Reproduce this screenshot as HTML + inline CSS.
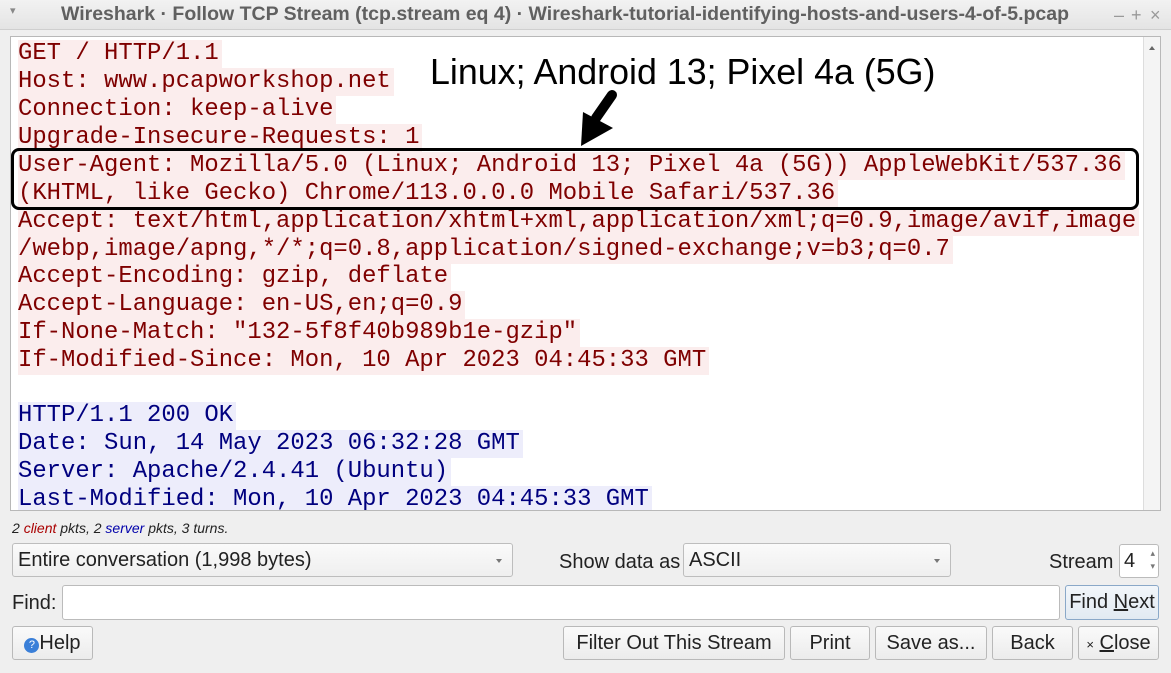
<!DOCTYPE html>
<html><head><meta charset="utf-8"><style>
*{box-sizing:border-box;margin:0;padding:0}
body{width:1171px;height:673px;background:#efefef;position:relative;overflow:hidden;font-family:"Liberation Sans",sans-serif;color:#222}
.abs{position:absolute}
.title{left:0;top:0;width:1130px;height:30px;text-align:center;font-size:19.5px;line-height:29px;color:#606060;font-weight:bold;white-space:nowrap}
.tbar{left:0;top:0;width:1171px;height:30px;background:linear-gradient(#f2f2f2,#e4e4e4);border-bottom:1px solid #cfcfcf}
.ta{left:10px;top:36px;width:1151px;height:475px;background:#fff;border:1px solid #b8b8b8}
.code{left:11px;top:40px;width:1132px;height:470px;overflow:hidden;font-family:"Liberation Mono",monospace;font-size:23.9px}
.ln{position:absolute;left:7px;height:28px;line-height:28px;white-space:pre;padding-right:3px}
.c{color:#7f0000;background:#fbeded}
.s{color:#00007f;background:#ededfb}
.sb{left:1143px;top:37px;width:17px;height:473px;background:#f4f4f4;border-left:1px solid #ddd}
.btn{position:absolute;height:34px;border:1px solid #b9b9b9;border-radius:3px;background:linear-gradient(#fafafa,#ececec);font-size:20px;line-height:32px;text-align:center;color:#222}
.combo{position:absolute;height:34px;border:1px solid #bdbdbd;border-radius:3px;background:linear-gradient(#fafafa,#efefef);font-size:20px;line-height:32px;padding-left:5px}
.combo:after{content:"";position:absolute;right:10px;top:15px;border:3px solid transparent;border-top:4px solid #777}
.lbl{position:absolute;font-size:20px;line-height:24px}
.wc{position:absolute;top:2px;font-size:18px;color:#999;line-height:26px}
</style></head><body>
<div class="abs tbar"></div>
<div class="abs title">Wireshark · Follow TCP Stream (tcp.stream eq 4) · Wireshark-tutorial-identifying-hosts-and-users-4-of-5.pcap</div>
<div class="abs" style="left:10px;top:4px;font-size:11px;color:#888">▾</div>
<span class="wc" style="left:1114px">–</span><span class="wc" style="left:1131px">+</span><span class="wc" style="left:1150px">×</span>
<div class="abs ta"></div>
<div class="abs code">
<div class="ln c" style="top:0">GET / HTTP/1.1</div>
<div class="ln c" style="top:28px">Host: www.pcapworkshop.net</div>
<div class="ln c" style="top:56px">Connection: keep-alive</div>
<div class="ln c" style="top:84px">Upgrade-Insecure-Requests: 1</div>
<div class="ln c" style="top:112px">User-Agent: Mozilla/5.0 (Linux; Android 13; Pixel 4a (5G)) AppleWebKit/537.36</div>
<div class="ln c" style="top:140px">(KHTML, like Gecko) Chrome/113.0.0.0 Mobile Safari/537.36</div>
<div class="ln c" style="top:168px">Accept: text/html,application/xhtml+xml,application/xml;q=0.9,image/avif,image</div>
<div class="ln c" style="top:196px">/webp,image/apng,*/*;q=0.8,application/signed-exchange;v=b3;q=0.7</div>
<div class="ln c" style="top:223px">Accept-Encoding: gzip, deflate</div>
<div class="ln c" style="top:251px">Accept-Language: en-US,en;q=0.9</div>
<div class="ln c" style="top:279px">If-None-Match: "132-5f8f40b989b1e-gzip"</div>
<div class="ln c" style="top:307px">If-Modified-Since: Mon, 10 Apr 2023 04:45:33 GMT</div>
<div class="ln s" style="top:362px">HTTP/1.1 200 OK</div>
<div class="ln s" style="top:390px">Date: Sun, 14 May 2023 06:32:28 GMT</div>
<div class="ln s" style="top:418px">Server: Apache/2.4.41 (Ubuntu)</div>
<div class="ln s" style="top:446px">Last-Modified: Mon, 10 Apr 2023 04:45:33 GMT</div>
</div>
<div class="abs sb"><div style="position:absolute;left:5px;top:6px;border:3px solid transparent;border-bottom:4px solid #666"></div></div>
<div class="abs" style="left:11px;top:148px;width:1128px;height:62px;border:3px solid #000;border-radius:8px"></div>
<div class="abs" style="left:430px;top:52px;font-size:35.8px;color:#000;white-space:nowrap">Linux; Android 13; Pixel 4a (5G)</div>
<svg class="abs" style="left:0;top:0" width="1171" height="673"><line x1="612" y1="95" x2="596" y2="118" stroke="#000" stroke-width="10" stroke-linecap="round"/><polygon points="583,112 613,128 581,146" fill="#000"/></svg>
<div class="lbl" style="left:12px;top:516px;font-size:14px;font-style:italic">2 <span style="color:#a00">client</span> pkts, 2 <span style="color:#00a">server</span> pkts, 3 turns.</div>
<div class="combo" style="left:12px;top:543px;width:501px">Entire conversation (1,998 bytes)</div>
<div class="lbl" style="left:559px;top:550px">Show data as</div>
<div class="combo" style="left:683px;top:543px;width:268px">ASCII</div>
<div class="lbl" style="left:1049px;top:550px">Stream</div>
<div class="abs" style="left:1119px;top:544px;width:40px;height:34px;background:#fff;border:1px solid #bbb;border-radius:3px;font-size:20px;line-height:32px;padding-left:4px">4<span style="position:absolute;right:3px;top:2px;font-size:9px;line-height:13px;color:#777">▴<br>▾</span></div>
<div class="lbl" style="left:12px;top:591px">Find:</div>
<div class="abs" style="left:62px;top:585px;width:998px;height:35px;background:#fff;border:1px solid #bbb;border-radius:3px"></div>
<div class="btn" style="left:1065px;top:585px;width:94px;height:35px;border-color:#8aa8c8;background:linear-gradient(#f2f6fa,#e2eaf2)">Find <u>N</u>ext</div>
<div class="btn" style="left:12px;top:626px;width:81px"><span style="display:inline-block;width:15px;height:15px;border-radius:50%;background:#3a7fd8;color:#fff;font-size:11px;line-height:15px;vertical-align:1px">?</span>Help</div>
<div class="btn" style="left:563px;top:626px;width:222px">Filter Out This Stream</div>
<div class="btn" style="left:790px;top:626px;width:80px">Print</div>
<div class="btn" style="left:875px;top:626px;width:112px">Save as...</div>
<div class="btn" style="left:992px;top:626px;width:81px">Back</div>
<div class="btn" style="left:1078px;top:626px;width:81px"><span style="font-size:13px">×</span> <u>C</u>lose</div>
</body></html>
